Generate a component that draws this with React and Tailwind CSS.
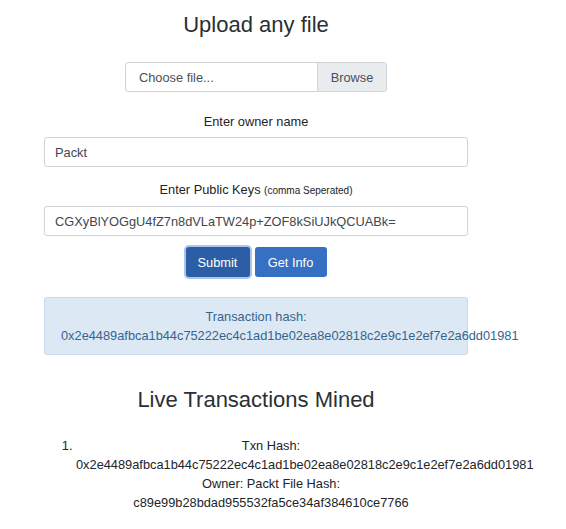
import React, { useState } from "react";

const txHash = "0x2e4489afbca1b44c75222ec4c1ad1be02ea8e02818c2e9c1e2ef7e2a6dd01981";

const App = () => {
  const [owner, setOwner] = useState("Packt");
  const [keys, setKeys] = useState("CGXyBlYOGgU4fZ7n8dVLaTW24p+ZOF8kSiUJkQCUABk=");

  return (
    <div className="min-h-[529px] w-[566px] bg-white font-['Liberation_Sans',Arial,sans-serif] text-[12.8px] leading-[19px] text-[#212529]">
      <div className="ml-[44px] w-[424px] pt-[12px]">
        <h3 className="mb-[24px] text-center text-[22px] font-medium leading-[26px] text-[#2b2f33]">
          Upload any file
        </h3>

        {/* file picker */}
        <div className="mx-auto mb-[20px] flex h-[30px] w-[262px] overflow-hidden rounded-[3px] border border-[#ced4da] text-[#495057]">
          <span className="flex flex-1 items-center pl-[13px]">Choose file...</span>
          <span className="flex w-[69px] items-center justify-center border-l border-[#ced4da] bg-[#e9ecef]">
            Browse
          </span>
        </div>

        <label className="mb-[6px] block text-center">Enter owner name</label>
        <input
          type="text"
          value={owner}
          onChange={e => setOwner(e.target.value)}
          className="mb-[13px] block h-[30px] w-full rounded-[3px] border border-[#ced4da] px-[10px] text-[#3f474f] outline-none"
        />

        <label className="mb-[6px] block text-center">
          Enter Public Keys <span className="text-[10px]">(comma Seperated)</span>
        </label>
        <input
          type="text"
          value={keys}
          onChange={e => setKeys(e.target.value)}
          className="mb-[11px] block h-[30px] w-full rounded-[3px] border border-[#ced4da] px-[10px] text-[#3f474f] outline-none"
        />

        <div className="mb-[20px] flex justify-center gap-[5px]">
          <button className="h-[30px] w-[64px] rounded-[3px] bg-[#2c5ea6] text-white ring-2 ring-[#a9c7ec]">
            Submit
          </button>
          <button className="h-[30px] w-[72px] rounded-[3px] bg-[#3570c2] text-white">
            Get Info
          </button>
        </div>

        <div className="rounded-[3px] border border-[#c9dbe9] bg-[#dce9f4] px-[16px] py-[9px] text-center text-[#35658f]">
          <div>Transaction hash:</div>
          <div className="whitespace-nowrap">{txHash}</div>
        </div>

        <h3 className="mb-[23px] mt-[32px] text-center text-[22px] font-medium leading-[26px] text-[#2b2f33]">
          Live Transactions Mined
        </h3>

        <ol className="ml-[32px] w-[390px] list-decimal text-center">
          <li>
            Txn Hash: {txHash} Owner: Packt File Hash: c89e99b28bdad955532fa5ce34af384610ce7766
          </li>
        </ol>
      </div>
    </div>
  );
};

export default App;
